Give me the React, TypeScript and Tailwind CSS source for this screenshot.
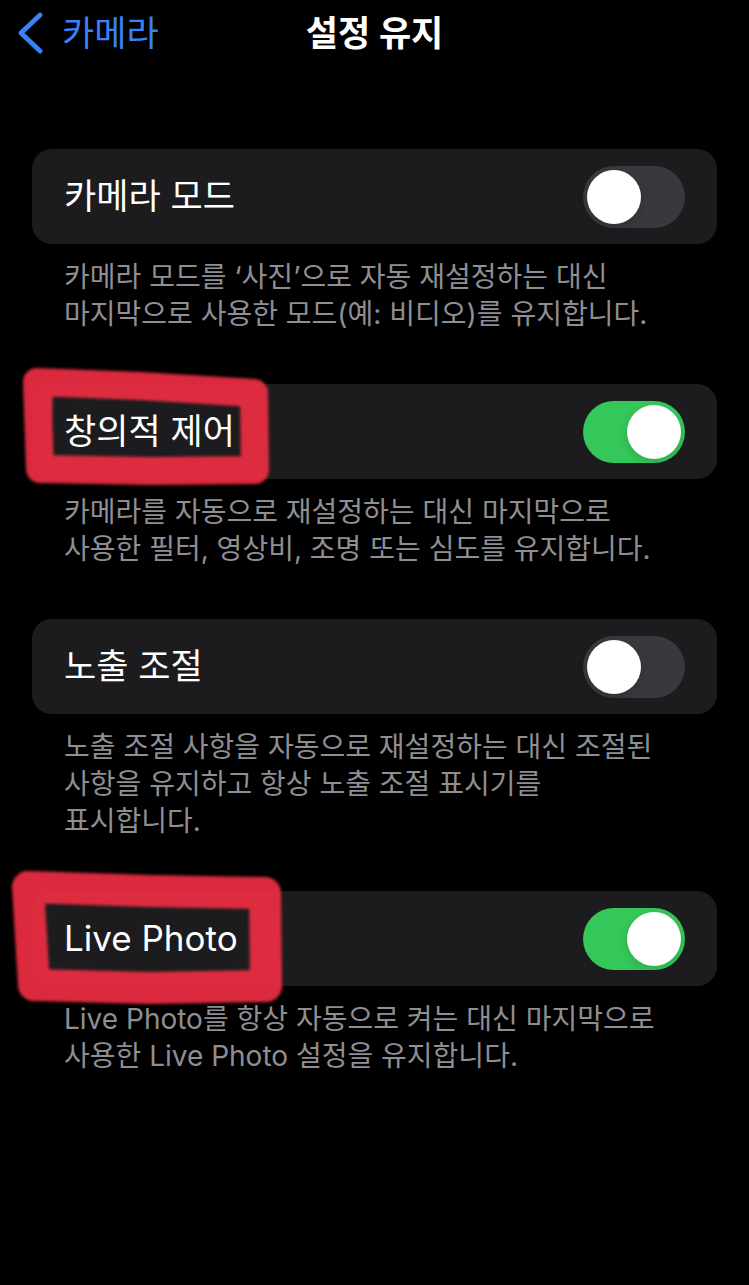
import React from "react"

type Setting = {
  label: string
  on: boolean
  footer: string[]
}

const settings: Setting[] = [
  {
    label: "카메라 모드",
    on: false,
    footer: ["카메라 모드를 ‘사진’으로 자동 재설정하는 대신", "마지막으로 사용한 모드(예: 비디오)를 유지합니다."],
  },
  {
    label: "창의적 제어",
    on: true,
    footer: ["카메라를 자동으로 재설정하는 대신 마지막으로", "사용한 필터, 영상비, 조명 또는 심도를 유지합니다."],
  },
  {
    label: "노출 조절",
    on: false,
    footer: [
      "노출 조절 사항을 자동으로 재설정하는 대신 조절된",
      "사항을 유지하고 항상 노출 조절 표시기를",
      "표시합니다.",
    ],
  },
  {
    label: "Live Photo",
    on: true,
    footer: ["Live Photo를 항상 자동으로 켜는 대신 마지막으로", "사용한 Live Photo 설정을 유지합니다."],
  },
]

function Toggle({ on }: { on: boolean }) {
  return (
    <div
      className={`flex h-[62px] w-[102px] shrink-0 items-center rounded-full px-[4px] ${
        on ? "justify-end bg-[#34c759]" : "justify-start bg-[#39393d]"
      }`}
    >
      <div className="h-[54px] w-[54px] rounded-full bg-white shadow-[0_3px_8px_rgba(0,0,0,0.15)]" />
    </div>
  )
}

function Marker() {
  // hand-drawn red highlight scribbles
  return (
    <svg
      className="pointer-events-none absolute left-0 top-0"
      width="749"
      height="1285"
      viewBox="0 0 749 1285"
    >
      <defs>
        <filter id="soft" x="-10%" y="-10%" width="120%" height="120%">
          <feGaussianBlur stdDeviation="1.4" />
        </filter>
      </defs>
      <g
        fill="none"
        stroke="#ec2d43"
        strokeLinejoin="round"
        strokeLinecap="round"
        opacity="0.93"
        filter="url(#soft)"
      >
        <path
          d="M37 382 L140 386 L254 393 L255 470 L150 471 L40 469 Z"
          strokeWidth="28"
        />
        <path d="M46 388 L44 462" strokeWidth="14" />
        <path
          d="M28 887 L150 891 L265 893 L266 986 L150 988 L34 985 Z"
          strokeWidth="32"
        />
        <path d="M36 895 L40 975" strokeWidth="12" />
        <path d="M40 996 L225 994" strokeWidth="10" />
      </g>
    </svg>
  )
}

export default function App() {
  return (
    <div
      className="relative min-h-[1285px] w-full overflow-hidden bg-black text-white"
      style={{ fontFamily: '"Inter", "Noto Sans CJK KR", sans-serif' }}
    >
      <header className="grid h-[66px] grid-cols-[1fr_auto_1fr] items-center">
        <div className="flex items-center gap-[19px] pl-[17px] text-[#3a82f7]">
          <svg width="26" height="42" viewBox="0 0 26 42" fill="none">
            <path
              d="M23 3 L4 21 L23 39"
              stroke="currentColor"
              strokeWidth="4.8"
              strokeLinecap="round"
              strokeLinejoin="round"
            />
          </svg>
          <span className="text-[35px] leading-none">카메라</span>
        </div>
        <h1 className="text-[35px] font-semibold leading-none">설정 유지</h1>
        <div />
      </header>

      <main className="px-[32px] pt-[83px]">
        {settings.map((s) => (
          <section key={s.label}>
            <div className="flex h-[95px] items-center justify-between rounded-[20px] bg-[#1c1c1e] pl-[32px] pr-[32px]">
              <span className="text-[35px] leading-none">{s.label}</span>
              <Toggle on={s.on} />
            </div>
            <div className="px-[32px] pb-[51px] pt-[15px] text-[28px] leading-[37px] text-[#8e8e93]">
              {s.footer.map((line) => (
                <p key={line} className="whitespace-nowrap">
                  {line}
                </p>
              ))}
            </div>
          </section>
        ))}
      </main>

      <Marker />
    </div>
  )
}
